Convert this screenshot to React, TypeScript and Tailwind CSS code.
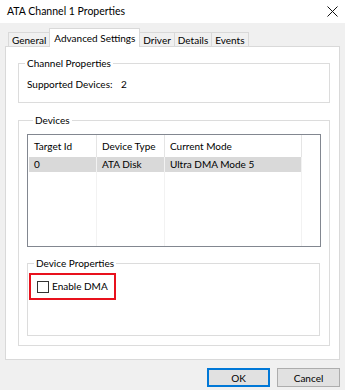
import React from "react";

const tabs = ["General", "Advanced Settings", "Driver", "Details", "Events"];

function GroupBox({
  label,
  className,
  children,
}: {
  label: string;
  className?: string;
  children?: React.ReactNode;
}) {
  return (
    <fieldset className={`border border-[#dcdcdc] ${className ?? ""}`}>
      <legend className="ml-[6px] px-[2px] text-[10px] leading-[13px]">{label}</legend>
      {children}
    </fieldset>
  );
}

export default function App() {
  return (
    <div
      className="flex h-[390px] w-[345px] flex-col bg-[#f0f0f0] text-[10px] text-black"
      style={{ fontFamily: "Lato, 'Liberation Sans', sans-serif" }}
    >
      {/* Title bar */}
      <div className="flex h-[23px] items-center justify-between bg-white pl-[7px] pr-[6px]">
        <span className="text-[10.5px]">ATA Channel 1 Properties</span>
        <svg width="11" height="11" viewBox="0 0 11 11" className="mr-[1px]">
          <path d="M0.5 0.5 L10.5 10.5 M10.5 0.5 L0.5 10.5" stroke="#111" strokeWidth="1" />
        </svg>
      </div>

      {/* Tabs */}
      <div className="mt-[5px] flex h-[19px] items-end pl-[8px]">
        {tabs.map((t) => {
          const active = t === "Advanced Settings";
          return active ? (
            <div
              key={t}
              className="relative z-10 -mx-[1px] flex h-[19px] items-start border border-b-0 border-[#d9d9d9] bg-white px-[4px] pt-[2px]"
            >
              {t}
            </div>
          ) : (
            <div
              key={t}
              className="flex h-[15px] items-center border border-b-0 border-[#d9d9d9] bg-[#f0f0f0] px-[3px] [&+&]:border-l-0"
            >
              {t}
            </div>
          );
        })}
      </div>

      {/* Panel */}
      <div className="-mt-[1px] ml-[5px] h-[314px] w-[335px] border border-[#d9d9d9] bg-white px-[12px] pt-[10px]">
        <GroupBox label="Channel Properties" className="h-[46px] w-[312px]">
          <div className="flex pl-[8px] pt-[7px]">
            <span className="w-[94px]">Supported Devices:</span>
            <span>2</span>
          </div>
        </GroupBox>

        <GroupBox label="Devices" className="mt-[11px] h-[232px] w-[312px] px-[8px]">
          {/* List view */}
          <div className="mt-[7px] h-[113px] w-[294px] border border-[#828790] bg-white">
            <div className="flex h-[22px] items-center">
              <div className="h-full w-[69px] border-r border-[#e5e5e5] pl-[6px] leading-[22px]">Target Id</div>
              <div className="h-full w-[68px] border-r border-[#e5e5e5] pl-[5px] leading-[22px]">Device Type</div>
              <div className="h-full w-[137px] border-r border-[#e5e5e5] pl-[5px] leading-[22px]">Current Mode</div>
            </div>
            <div className="flex h-[89px]">
              <div className="w-[69px] border-r border-[#f2f2f2]">
                <div className="ml-[1px] h-[15px] bg-[#d9d9d9] pl-[5px] leading-[15px]">0</div>
              </div>
              <div className="w-[68px] border-r border-[#f2f2f2]">
                <div className="h-[15px] bg-[#d9d9d9] pl-[5px] leading-[15px]">ATA Disk</div>
              </div>
              <div className="w-[137px] border-r border-[#f2f2f2]">
                <div className="h-[15px] bg-[#d9d9d9] pl-[5px] leading-[15px]">Ultra DMA Mode 5</div>
              </div>
            </div>
          </div>

          <GroupBox label="Device Properties" className="mt-[10px] h-[79px] w-[293px]">
            <div className="ml-[1px] mt-[3px] flex h-[27px] w-[87px] items-center border-2 border-[#e8111d] pl-[6px]">
              <span className="h-[12px] w-[12px] border border-[#333] bg-white" />
              <span className="ml-[3px]">Enable DMA</span>
            </div>
          </GroupBox>
        </GroupBox>
      </div>

      {/* Buttons */}
      <div className="mt-[8px] flex justify-end gap-[7px] pr-[5px]">
        <button className="h-[19px] w-[63px] border-2 border-[#0078d7] bg-[#e1e1e1] text-[10px] leading-none">
          OK
        </button>
        <button className="h-[19px] w-[63px] border border-[#adadad] bg-[#e1e1e1] text-[10px] leading-none">
          Cancel
        </button>
      </div>
    </div>
  );
}
